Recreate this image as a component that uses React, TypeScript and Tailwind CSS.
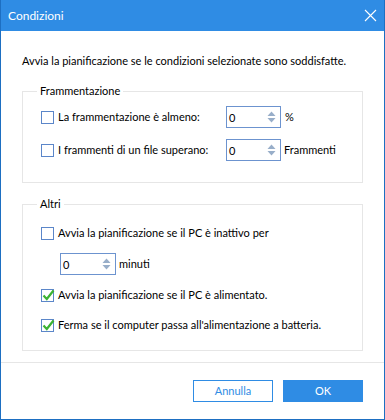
const font = { fontFamily: 'Lato, "Liberation Sans", Arial, sans-serif' }

const Checkbox = ({ checked }: { checked?: boolean }) => (
  <span className="relative inline-block w-[13px] h-[13px] border border-[#5b86c9] bg-white shrink-0">
    {checked && (
      <svg className="absolute left-[-1px] top-[-2px]" width="15" height="14" viewBox="0 0 15 14">
        <path d="M2.5 7.5 L5.8 11 L12.5 2.5" fill="none" stroke="#3cb332" strokeWidth="2.2" />
      </svg>
    )}
  </span>
)

const SpinBox = ({ value, width }: { value: string; width: string }) => (
  <div className={`flex items-center h-[22px] border border-[#6c93cf] bg-white ${width}`}>
    <span className="flex-1 pl-[2px] pt-[2px] text-black">{value}</span>
    <div className="flex flex-col items-center gap-[2px] w-[14px] mr-[2px]">
      <svg width="9" height="5" viewBox="0 0 9 5">
        <path d="M0.5 5 L4.5 0.5 L8.5 5 Z" fill="#98aec9" />
      </svg>
      <svg width="9" height="5" viewBox="0 0 9 5">
        <path d="M0.5 0 L4.5 4.5 L8.5 0 Z" fill="#98aec9" />
      </svg>
    </div>
  </div>
)

export default function App() {
  return (
    <div
      className="w-[385px] h-[420px] bg-white flex flex-col border-x border-b border-[#1d6fc2] text-[11px] text-black"
      style={font}
    >
      {/* title bar */}
      <div className="h-[31px] bg-[#2f8ce4] flex items-center justify-between pl-[7px] pr-[7px] shrink-0">
        <span className="text-white text-[12px]">Condizioni</span>
        <svg width="13" height="13" viewBox="0 0 13 13">
          <path d="M1 1 L12 12 M12 1 L1 12" stroke="#ffffff" strokeWidth="1.1" />
        </svg>
      </div>

      <div className="flex-1 flex flex-col px-[21px]">
        <p className="mt-[22px] leading-[15px] whitespace-nowrap">
          Avvia la pianificazione se le condizioni selezionate sono soddisfatte.
        </p>

        <fieldset className="mt-[16px] h-[99px] border border-[#e6e6e6]">
          <legend className="ml-[14px] px-[3px] leading-[14px]">Frammentazione</legend>
          <div className="flex items-center h-[22px] mt-[8px] pl-[18px]">
            <Checkbox />
            <span className="ml-[4px] w-[168px]">La frammentazione è almeno:</span>
            <SpinBox value="0" width="w-[55px]" />
            <span className="ml-[4px]">%</span>
          </div>
          <div className="flex items-center h-[22px] mt-[11px] pl-[18px]">
            <Checkbox />
            <span className="ml-[4px] w-[168px]">I frammenti di un file superano:</span>
            <SpinBox value="0" width="w-[55px]" />
            <span className="ml-[3px]">Frammenti</span>
          </div>
        </fieldset>

        <fieldset className="mt-[14px] h-[154px] border border-[#e6e6e6]">
          <legend className="ml-[14px] px-[3px] leading-[14px]">Altri</legend>
          <div className="flex items-center h-[16px] mt-[14px] pl-[18px]">
            <Checkbox />
            <span className="ml-[4px]">Avvia la pianificazione se il PC è inattivo per</span>
          </div>
          <div className="flex items-center h-[22px] mt-[12px] pl-[37px]">
            <SpinBox value="0" width="w-[56px]" />
            <span className="ml-[3px]">minuti</span>
          </div>
          <div className="flex items-center h-[16px] mt-[12px] pl-[18px]">
            <Checkbox checked />
            <span className="ml-[4px]">Avvia la pianificazione se il PC è alimentato.</span>
          </div>
          <div className="flex items-center h-[16px] mt-[14px] pl-[18px]">
            <Checkbox checked />
            <span className="ml-[4px] whitespace-nowrap">Ferma se il computer passa all'alimentazione a batteria.</span>
          </div>
        </fieldset>
      </div>

      <div className="h-[57px] border-t border-[#e6e6e6] flex items-center justify-end gap-[10px] pr-[21px] shrink-0">
        <button className="w-[80px] h-[22px] border border-[#2f8ce4] text-[#2f8ce4] bg-white">
          Annulla
        </button>
        <button className="w-[80px] h-[22px] bg-[#2f8ce4] text-white">OK</button>
      </div>
    </div>
  )
}
